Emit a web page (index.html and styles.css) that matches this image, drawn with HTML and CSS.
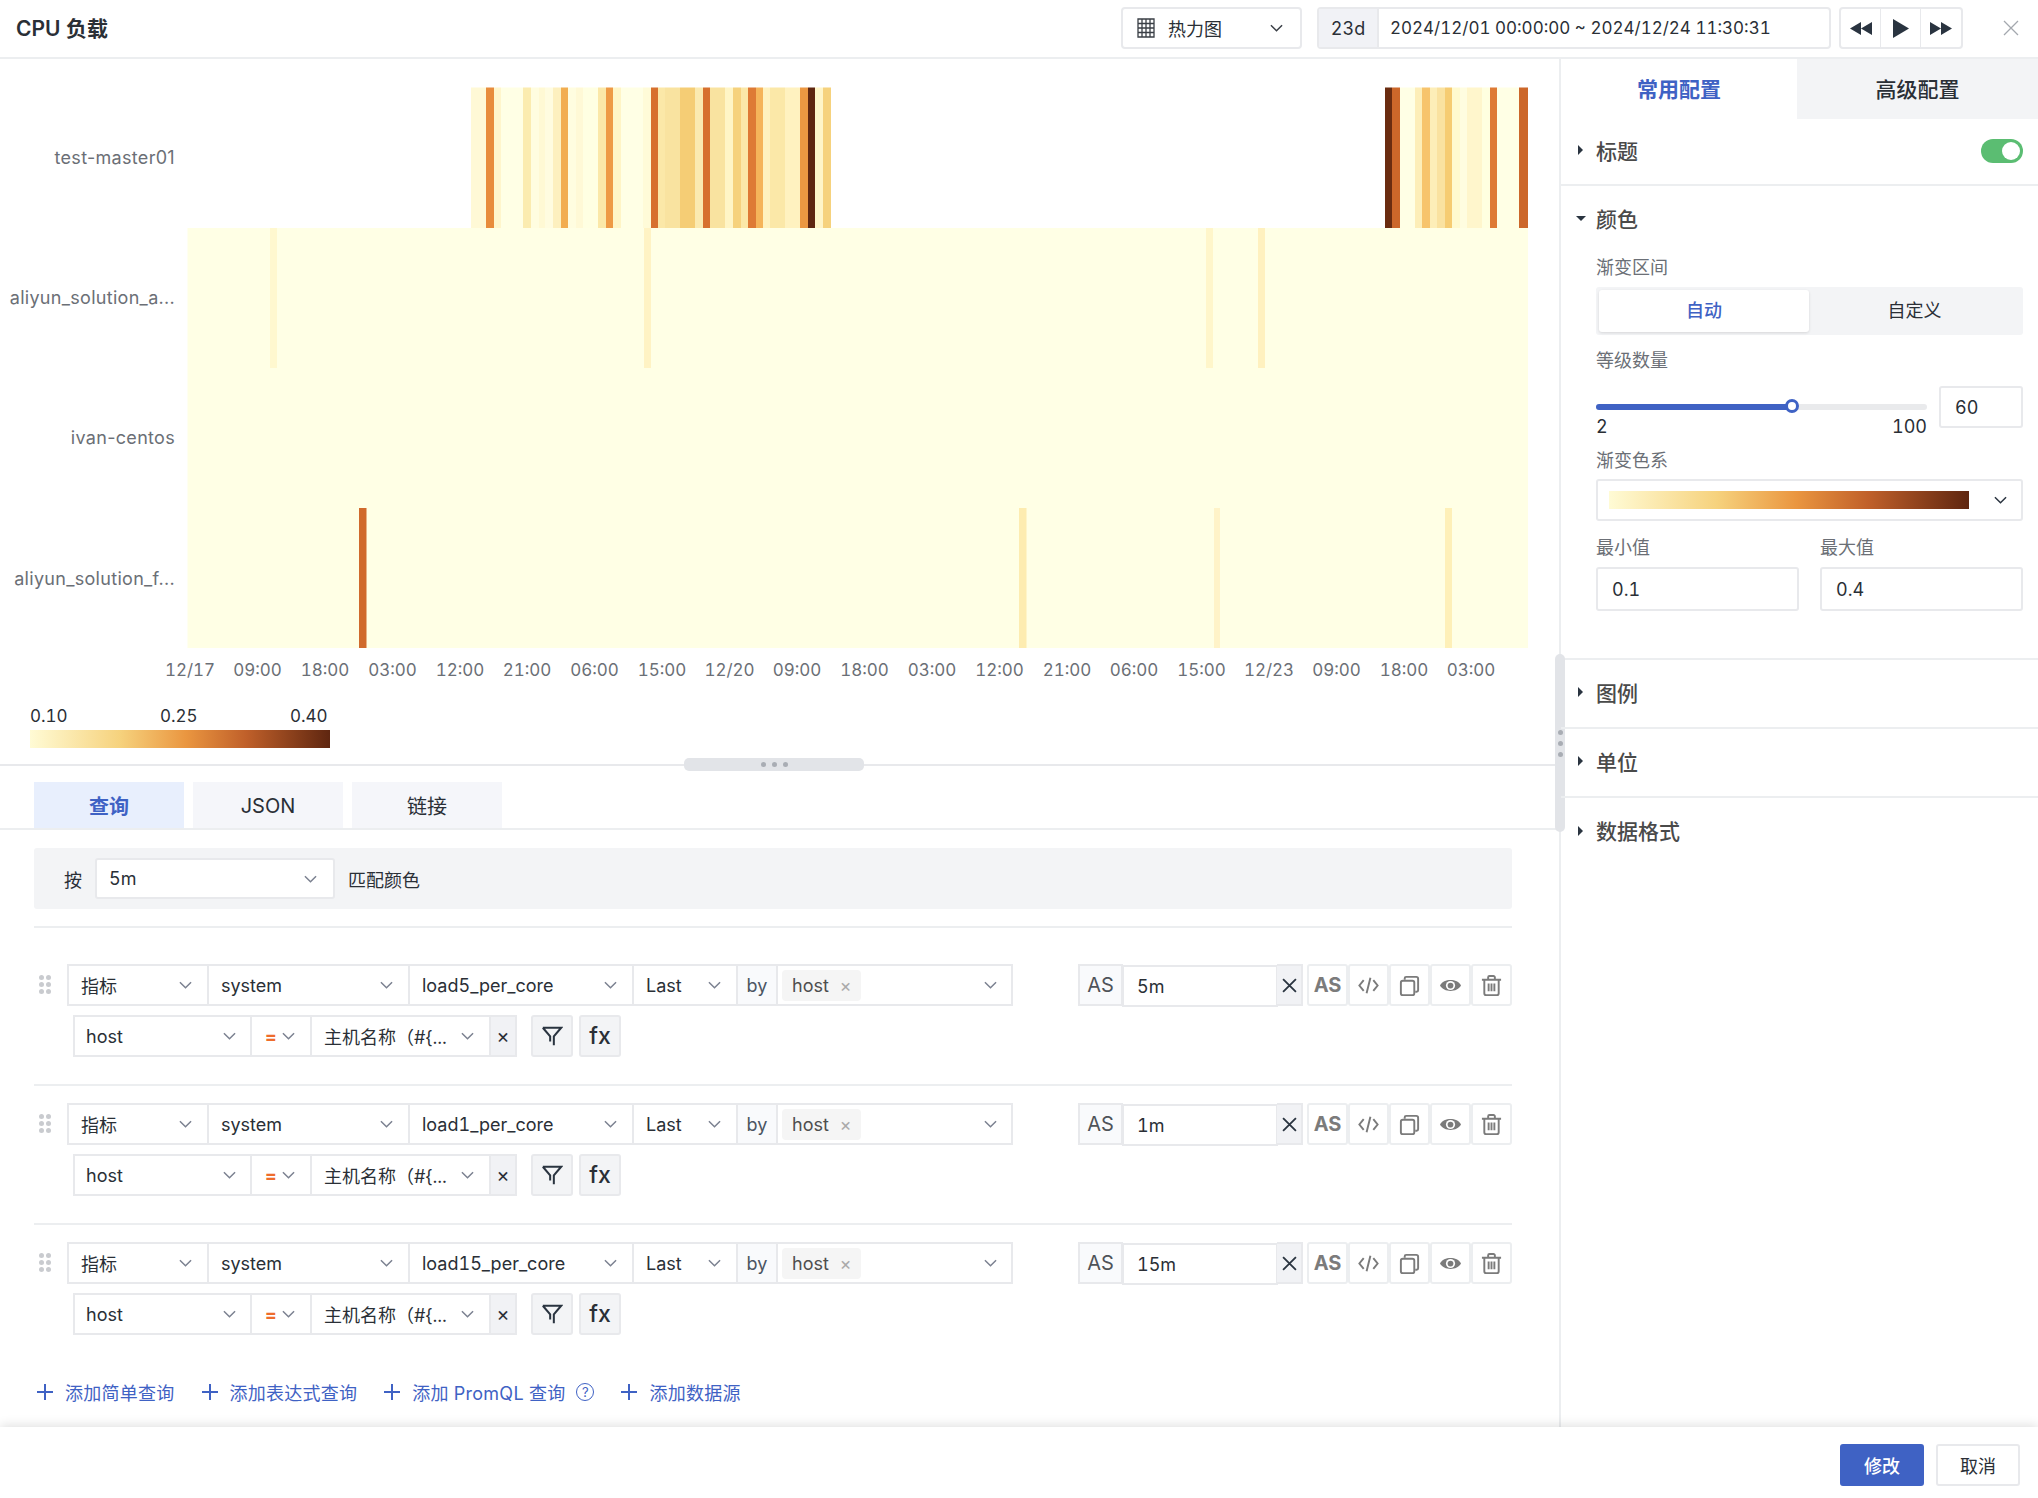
FILE: index.html
```html
<!DOCTYPE html>
<html lang="zh-CN">
<head>
    <meta charset="UTF-8">
    <title>CPU 负载</title>
    <link rel="stylesheet" href="styles.css">
</head>
<body>
    <svg class="defs">
        <symbol id="chev" viewBox="0 0 14 8"><path d="M1 1l6 6 6-6"/></symbol>
        <symbol id="cross" viewBox="0 0 14 14"><path d="M1 1l12 12M13 1L1 13"/></symbol>
        <symbol id="code" viewBox="0 0 24 24"><path d="M7 6.500L2.500 12 7 17.500M17 6.500l4.500 5.500L17 17.500M14 4l-4 16"/></symbol>
        <symbol id="copy" viewBox="0 0 24 24"><rect x="3" y="7" width="14" height="15" rx="2"/><path d="M7 6V4.500A1.500 1.500 0 0 1 8.500 3H19a2 2 0 0 1 2 2v12a1.500 1.500 0 0 1-1.500 1.500H18"/></symbol>
        <symbol id="eye" viewBox="0 0 24 24"><path class="solid" d="M1 12C5 4.500 19 4.500 23 12 19 19.500 5 19.500 1 12z"/><circle class="hole" cx="12" cy="12" r="4.800"/><circle class="solid" cx="12" cy="12" r="3"/></symbol>
        <symbol id="trash" viewBox="0 0 24 24"><path d="M2 6h20M8.500 6V3.500A1.500 1.500 0 0 1 10 2h4a1.500 1.500 0 0 1 1.500 1.500V6M4.500 6v14a2 2 0 0 0 2 2h11a2 2 0 0 0 2-2V6M9 10v8M12 10v8M15 10v8"/></symbol>
        <symbol id="funnel" viewBox="0 0 24 24"><path d="M2 3h20l-8 9.500V22M2 3l8 9.500V18"/></symbol>
        <symbol id="plus" viewBox="0 0 16 16"><path d="M8 0v16M0 8h16"/></symbol>
    </svg>

    <header class="top">
        <div class="title">CPU 负载</div>
        <div class="chart-type">
            <svg class="grid-icon" viewBox="0 0 18 20"><path d="M1 1h16v18H1zM1 5.500h16M1 10h16M1 14.500h16M5 1v18M9 1v18M13 1v18"/></svg>
            <span class="chart-type-text">热力图</span>
            <svg class="chev"><use href="#chev"/></svg>
        </div>
        <div class="range">
            <span class="range-tag">23d</span>
            <span class="range-text">2024/12/01 00:00:00 ~ 2024/12/24 11:30:31</span>
        </div>
        <div class="player">
            <span class="player-btn"><svg class="rew" viewBox="0 0 22 13"><path d="M11 0v13L0 6.500zM22 0v13L11 6.500z"/></svg></span>
            <span class="player-btn"><svg class="play" viewBox="0 0 16 19"><path d="M0 0l16 9.500L0 19z"/></svg></span>
            <span class="player-btn"><svg class="rew" viewBox="0 0 22 13"><path d="M0 0l11 6.500L0 13zM11 0l11 6.500L11 13z"/></svg></span>
        </div>
        <svg class="close" viewBox="0 0 16 16"><path d="M1 1l14 14M15 1L1 15"/></svg>
    </header>

    <div class="main">
        <div class="left">
            <svg class="chart" viewBox="0 59 1559 705">
                <text class="row-label" x="175" y="164">test-master01</text>
                <text class="row-label" x="175" y="304">aliyun_solution_a...</text>
                <text class="row-label" x="175" y="444">ivan-centos</text>
                <text class="row-label" x="175" y="585">aliyun_solution_f...</text>

                <rect x="187.500" y="228" width="1340.500" height="420" fill="#ffffe5"/>

                <g class="heat-top">
                    <rect x="471" width="15" fill="#fff9d6"/>
                    <rect x="486" width="8" fill="#e88c3c"/>
                    <rect x="494" width="7" fill="#fff6cc"/>
                    <rect x="501" width="22" fill="#ffffe5"/>
                    <rect x="523" width="8" fill="#fbecb0"/>
                    <rect x="531" width="8" fill="#fffde0"/>
                    <rect x="539" width="6" fill="#fff9d4"/>
                    <rect x="545" width="8" fill="#fffce0"/>
                    <rect x="553" width="8" fill="#fdf0bf"/>
                    <rect x="561" width="7" fill="#f2ad50"/>
                    <rect x="568" width="8" fill="#fffde0"/>
                    <rect x="576" width="7" fill="#fff9d6"/>
                    <rect x="583" width="15" fill="#ffffe2"/>
                    <rect x="598" width="8" fill="#fbe8a8"/>
                    <rect x="606" width="7" fill="#ee9a45"/>
                    <rect x="613" width="8" fill="#fff5c6"/>
                    <rect x="621" width="22" fill="#ffffe5"/>
                    <rect x="643" width="8" fill="#fffbd8"/>
                    <rect x="651" width="7" fill="#d7702e"/>
                    <rect x="658" width="7" fill="#fbe8a8"/>
                    <rect x="665" width="15" fill="#f9e3a0"/>
                    <rect x="680" width="15" fill="#f5cd75"/>
                    <rect x="695" width="8" fill="#fbeab0"/>
                    <rect x="703" width="7" fill="#d7702e"/>
                    <rect x="710" width="15" fill="#f9e3a0"/>
                    <rect x="725" width="8" fill="#fff5c6"/>
                    <rect x="733" width="8" fill="#f6d27d"/>
                    <rect x="741" width="7" fill="#fbe8a8"/>
                    <rect x="748" width="8" fill="#de7a35"/>
                    <rect x="756" width="7" fill="#f5b45a"/>
                    <rect x="763" width="7" fill="#fff2bf"/>
                    <rect x="770" width="15" fill="#fbe8a8"/>
                    <rect x="785" width="15" fill="#fff2c0"/>
                    <rect x="800" width="8" fill="#ec9842"/>
                    <rect x="808" width="7" fill="#5f2610"/>
                    <rect x="815" width="8" fill="#fff5c8"/>
                    <rect x="823" width="8" fill="#f6d27d"/>

                    <rect x="1385" width="7" fill="#6a2c10"/>
                    <rect x="1392" width="8" fill="#cc672a"/>
                    <rect x="1400" width="15" fill="#ffffe5"/>
                    <rect x="1415" width="7" fill="#fdeeb8"/>
                    <rect x="1422" width="8" fill="#f7c46c"/>
                    <rect x="1430" width="7" fill="#fdeeb8"/>
                    <rect x="1437" width="8" fill="#fae2a0"/>
                    <rect x="1445" width="7" fill="#f6cc72"/>
                    <rect x="1452" width="8" fill="#fffacf"/>
                    <rect x="1460" width="7" fill="#fffde0"/>
                    <rect x="1467" width="15" fill="#fff6cc"/>
                    <rect x="1482" width="8" fill="#ffffe0"/>
                    <rect x="1490" width="7" fill="#de7a35"/>
                    <rect x="1497" width="22" fill="#ffffe5"/>
                    <rect x="1519" width="9" fill="#cc672a"/>
                </g>

                <g class="heat-second">
                    <rect x="270" width="7" fill="#fff8cf"/>
                    <rect x="644" width="7" fill="#fff3c4"/>
                    <rect x="1206" width="7" fill="#fff6ca"/>
                    <rect x="1258" width="7" fill="#fff1bf"/>
                </g>

                <g class="heat-last">
                    <rect x="359" width="7.500" fill="#d06a2c"/>
                    <rect x="1019" width="7.500" fill="#fdecb0"/>
                    <rect x="1214" width="6" fill="#fff3c8"/>
                    <rect x="1445" width="7" fill="#fef0b8"/>
                </g>

                <g class="axis">
                    <text x="190" y="676">12/17</text>
                    <text x="257.500" y="676">09:00</text>
                    <text x="325" y="676">18:00</text>
                    <text x="392.500" y="676">03:00</text>
                    <text x="460" y="676">12:00</text>
                    <text x="527" y="676">21:00</text>
                    <text x="594.500" y="676">06:00</text>
                    <text x="662" y="676">15:00</text>
                    <text x="729.500" y="676">12/20</text>
                    <text x="797" y="676">09:00</text>
                    <text x="864.500" y="676">18:00</text>
                    <text x="932" y="676">03:00</text>
                    <text x="999.500" y="676">12:00</text>
                    <text x="1067" y="676">21:00</text>
                    <text x="1134" y="676">06:00</text>
                    <text x="1201.500" y="676">15:00</text>
                    <text x="1269" y="676">12/23</text>
                    <text x="1336.500" y="676">09:00</text>
                    <text x="1404" y="676">18:00</text>
                    <text x="1471" y="676">03:00</text>
                </g>

                <defs>
                    <linearGradient id="ramp">
                        <stop offset="0" stop-color="#fffbd5"/>
                        <stop offset="0.300" stop-color="#f6d27d"/>
                        <stop offset="0.520" stop-color="#ea9640"/>
                        <stop offset="0.720" stop-color="#c0602a"/>
                        <stop offset="1" stop-color="#5f2610"/>
                    </linearGradient>
                </defs>
                <g class="legend">
                    <text x="30" y="722">0.10</text>
                    <text x="160" y="722">0.25</text>
                    <text x="290" y="722">0.40</text>
                </g>
                <rect x="30" y="730" width="300" height="18" fill="url(#ramp)"/>
            </svg>

            <div class="splitter">
                <div class="splitter-grip"><i></i><i></i><i></i></div>
            </div>

            <div class="tabs">
                <div class="tab tab-on">查询</div>
                <div class="tab">JSON</div>
                <div class="tab">链接</div>
            </div>

            <div class="query">
                <div class="color-bar">
                    <span class="color-by">按</span>
                    <div class="color-select"><span>5m</span><svg class="chev"><use href="#chev"/></svg></div>
                    <span>匹配颜色</span>
                </div>

                <div class="rows">
                    <div class="q-row">
                        <div class="drag"><i></i><i></i><i></i><i></i><i></i><i></i></div>
                        <div class="q-lines">
                            <div class="q-line">
                                <div class="cell w140"><span>指标</span><svg class="chev"><use href="#chev"/></svg></div>
                                <div class="cell w201"><span>system</span><svg class="chev"><use href="#chev"/></svg></div>
                                <div class="cell w224"><span>load5_per_core</span><svg class="chev"><use href="#chev"/></svg></div>
                                <div class="cell w104"><span>Last</span><svg class="chev"><use href="#chev"/></svg></div>
                                <div class="cell-by">by</div>
                                <div class="cell w233"><span class="tag">host<b>×</b></span><svg class="chev"><use href="#chev"/></svg></div>
                            </div>
                            <div class="q-line-2">
                                <div class="q-line">
                                    <div class="cell w177"><span>host</span><svg class="chev"><use href="#chev"/></svg></div>
                                    <div class="cell w60"><span class="eq">=</span><svg class="chev"><use href="#chev"/></svg></div>
                                    <div class="cell w179"><span>主机名称（#{...</span><svg class="chev"><use href="#chev"/></svg></div>
                                    <div class="cell-x">×</div>
                                </div>
                                <div class="grey-btn btn-first"><svg class="funnel"><use href="#funnel"/></svg></div>
                                <div class="grey-btn">fx</div>
                            </div>
                        </div>
                        <div class="as-box">
                            <div class="as-tag">AS</div>
                            <div class="as-input">5m</div>
                            <div class="as-x"><svg class="cross"><use href="#cross"/></svg></div>
                            <div class="tools">
                                <div class="tool tool-as">AS</div>
                                <div class="tool"><svg class="tool-icon"><use href="#code"/></svg></div>
                                <div class="tool"><svg class="tool-icon"><use href="#copy"/></svg></div>
                                <div class="tool"><svg class="tool-icon"><use href="#eye"/></svg></div>
                                <div class="tool"><svg class="tool-icon"><use href="#trash"/></svg></div>
                            </div>
                        </div>
                    </div>

                    <div class="q-row">
                        <div class="drag"><i></i><i></i><i></i><i></i><i></i><i></i></div>
                        <div class="q-lines">
                            <div class="q-line">
                                <div class="cell w140"><span>指标</span><svg class="chev"><use href="#chev"/></svg></div>
                                <div class="cell w201"><span>system</span><svg class="chev"><use href="#chev"/></svg></div>
                                <div class="cell w224"><span>load1_per_core</span><svg class="chev"><use href="#chev"/></svg></div>
                                <div class="cell w104"><span>Last</span><svg class="chev"><use href="#chev"/></svg></div>
                                <div class="cell-by">by</div>
                                <div class="cell w233"><span class="tag">host<b>×</b></span><svg class="chev"><use href="#chev"/></svg></div>
                            </div>
                            <div class="q-line-2">
                                <div class="q-line">
                                    <div class="cell w177"><span>host</span><svg class="chev"><use href="#chev"/></svg></div>
                                    <div class="cell w60"><span class="eq">=</span><svg class="chev"><use href="#chev"/></svg></div>
                                    <div class="cell w179"><span>主机名称（#{...</span><svg class="chev"><use href="#chev"/></svg></div>
                                    <div class="cell-x">×</div>
                                </div>
                                <div class="grey-btn btn-first"><svg class="funnel"><use href="#funnel"/></svg></div>
                                <div class="grey-btn">fx</div>
                            </div>
                        </div>
                        <div class="as-box">
                            <div class="as-tag">AS</div>
                            <div class="as-input">1m</div>
                            <div class="as-x"><svg class="cross"><use href="#cross"/></svg></div>
                            <div class="tools">
                                <div class="tool tool-as">AS</div>
                                <div class="tool"><svg class="tool-icon"><use href="#code"/></svg></div>
                                <div class="tool"><svg class="tool-icon"><use href="#copy"/></svg></div>
                                <div class="tool"><svg class="tool-icon"><use href="#eye"/></svg></div>
                                <div class="tool"><svg class="tool-icon"><use href="#trash"/></svg></div>
                            </div>
                        </div>
                    </div>

                    <div class="q-row">
                        <div class="drag"><i></i><i></i><i></i><i></i><i></i><i></i></div>
                        <div class="q-lines">
                            <div class="q-line">
                                <div class="cell w140"><span>指标</span><svg class="chev"><use href="#chev"/></svg></div>
                                <div class="cell w201"><span>system</span><svg class="chev"><use href="#chev"/></svg></div>
                                <div class="cell w224"><span>load15_per_core</span><svg class="chev"><use href="#chev"/></svg></div>
                                <div class="cell w104"><span>Last</span><svg class="chev"><use href="#chev"/></svg></div>
                                <div class="cell-by">by</div>
                                <div class="cell w233"><span class="tag">host<b>×</b></span><svg class="chev"><use href="#chev"/></svg></div>
                            </div>
                            <div class="q-line-2">
                                <div class="q-line">
                                    <div class="cell w177"><span>host</span><svg class="chev"><use href="#chev"/></svg></div>
                                    <div class="cell w60"><span class="eq">=</span><svg class="chev"><use href="#chev"/></svg></div>
                                    <div class="cell w179"><span>主机名称（#{...</span><svg class="chev"><use href="#chev"/></svg></div>
                                    <div class="cell-x">×</div>
                                </div>
                                <div class="grey-btn btn-first"><svg class="funnel"><use href="#funnel"/></svg></div>
                                <div class="grey-btn">fx</div>
                            </div>
                        </div>
                        <div class="as-box">
                            <div class="as-tag">AS</div>
                            <div class="as-input">15m</div>
                            <div class="as-x"><svg class="cross"><use href="#cross"/></svg></div>
                            <div class="tools">
                                <div class="tool tool-as">AS</div>
                                <div class="tool"><svg class="tool-icon"><use href="#code"/></svg></div>
                                <div class="tool"><svg class="tool-icon"><use href="#copy"/></svg></div>
                                <div class="tool"><svg class="tool-icon"><use href="#eye"/></svg></div>
                                <div class="tool"><svg class="tool-icon"><use href="#trash"/></svg></div>
                            </div>
                        </div>
                    </div>
                </div>

                <div class="adds">
                    <div class="add"><svg class="plus"><use href="#plus"/></svg>添加简单查询</div>
                    <div class="add"><svg class="plus"><use href="#plus"/></svg>添加表达式查询</div>
                    <div class="add"><svg class="plus"><use href="#plus"/></svg>添加 PromQL 查询<span class="help">?</span></div>
                    <div class="add"><svg class="plus"><use href="#plus"/></svg>添加数据源</div>
                </div>
            </div>
        </div>

        <aside class="side">
            <div class="side-grip"><i></i><i></i><i></i></div>
            <div class="side-tabs">
                <div class="side-tab side-tab-on">常用配置</div>
                <div class="side-tab">高级配置</div>
            </div>

            <div class="sec sec-first">
                <span class="arrow-right"></span>
                <span>标题</span>
                <span class="toggle"></span>
            </div>

            <div class="sec sec-open">
                <span class="arrow-down"></span>
                <span>颜色</span>
            </div>
            <div class="form">
                <div class="label">渐变区间</div>
                <div class="seg">
                    <div class="seg-item seg-on">自动</div>
                    <div class="seg-item">自定义</div>
                </div>

                <div class="label label-gap">等级数量</div>
                <div class="slider-row">
                    <div class="slider">
                        <div class="track"><div class="track-fill"></div><span class="thumb"></span></div>
                        <div class="slider-ends"><span>2</span><span>100</span></div>
                    </div>
                    <div class="num-input">60</div>
                </div>

                <div class="label label-tight">渐变色系</div>
                <div class="ramp-select">
                    <div class="ramp"></div>
                    <svg class="chev chev-dark"><use href="#chev"/></svg>
                </div>

                <div class="min-max">
                    <div class="mm-col">
                        <div class="label">最小值</div>
                        <div class="mm-input">0.1</div>
                    </div>
                    <div class="mm-col">
                        <div class="label">最大值</div>
                        <div class="mm-input">0.4</div>
                    </div>
                </div>
            </div>

            <div class="sec"><span class="arrow-right"></span><span>图例</span></div>
            <div class="sec"><span class="arrow-right"></span><span>单位</span></div>
            <div class="sec sec-last"><span class="arrow-right"></span><span>数据格式</span></div>
        </aside>
    </div>

    <footer class="foot">
        <div class="btn btn-primary">修改</div>
        <div class="btn">取消</div>
    </footer>
</body>
</html>
```

FILE: styles.css
```css
* {
    box-sizing: border-box;
}

body {
    margin: 0;
    height: 100vh;
    display: flex;
    flex-direction: column;
    overflow: hidden;
    background-color: #fff;
    color: #2a2f36;
    font-family: Inter, "Noto Sans CJK SC", sans-serif;
    font-size: 18px;
    font-variant-numeric: tabular-nums;
}

.defs {
    display: none;
}

.chev {
    flex: none;
    width: 13px;
    height: 8px;
    fill: none;
    stroke: #7b8190;
    stroke-width: 1.6;
}

/* 顶部栏 */
.top {
    flex: none;
    height: 59px;
    display: flex;
    align-items: center;
    padding: 0 0 1px 16px;
    border-bottom: 2px solid #eceef0;
}

.title {
    flex: 1;
    padding-bottom: 2px;
    font-size: 21px;
    font-weight: 600;
}

.chart-type {
    width: 181px;
    height: 42px;
    display: flex;
    align-items: center;
    padding-left: 14px;
    border: 2px solid #e8e9ec;
    border-radius: 4px;
}

.grid-icon {
    width: 18px;
    height: 20px;
    fill: none;
    stroke: #3a3f46;
    stroke-width: 1.3;
}

.chart-type-text {
    flex: 1;
    margin-left: 13px;
}

.chart-type .chev {
    margin-right: 17px;
    stroke: #3a3f46;
}

.range {
    width: 514px;
    height: 42px;
    margin-left: 15px;
    display: flex;
    align-items: center;
    border: 2px solid #e8e9ec;
    border-radius: 4px;
}

.range-tag {
    width: 60px;
    height: 100%;
    display: flex;
    align-items: center;
    justify-content: center;
    background-color: #f1f2f6;
    border-right: 2px solid #e8e9ec;
}

.range-text {
    margin-left: 11px;
    font-size: 17px;
}

.player {
    height: 42px;
    margin-left: 8px;
    display: flex;
    border: 2px solid #e8e9ec;
    border-radius: 4px;
}

.player-btn {
    width: 40px;
    display: flex;
    align-items: center;
    justify-content: center;
    border-right: 1px solid #e8e9ec;
}

.player-btn:last-child {
    border-right: none;
}

.rew {
    width: 22px;
    height: 13px;
    fill: #2a3440;
}

.play {
    width: 16px;
    height: 19px;
    fill: #2a3440;
}

.close {
    width: 16px;
    height: 16px;
    margin: 0 19px 0 40px;
    fill: none;
    stroke: #a4a8ae;
    stroke-width: 1.3;
}

/* 主体 */
.main {
    flex: 1;
    display: flex;
    min-height: 0;
}

.left {
    width: 1559px;
    flex: none;
}

.chart {
    display: block;
    width: 1559px;
    height: 705px;
}

.chart text {
    font-size: 17px;
}

.chart .row-label {
    fill: #6b6f76;
    text-anchor: end;
    font-size: 18px;
    letter-spacing: 0.3px;
    font-variant-numeric: normal;
}

.heat-top rect {
    y: 87.500px;
    height: 140.500px;
}

.heat-second rect {
    y: 228px;
    height: 140px;
}

.heat-last rect {
    y: 508px;
    height: 140px;
}

.axis text {
    fill: #6b6f76;
    text-anchor: middle;
}

.legend text {
    fill: #2a2f36;
}

.splitter {
    position: relative;
    height: 2px;
    background-color: #e8e9ec;
}

.splitter-grip {
    position: absolute;
    left: 684px;
    top: -6px;
    width: 180px;
    height: 13px;
    display: flex;
    align-items: center;
    justify-content: center;
    gap: 6px;
    background-color: #e2e4e8;
    border-radius: 5px;
}

.splitter-grip i {
    width: 5px;
    height: 5px;
    border-radius: 50%;
    background-color: #a9adb4;
}

.tabs {
    margin-top: 16px;
    height: 48px;
    display: flex;
    gap: 9px;
    padding-left: 34px;
    border-bottom: 2px solid #eceef0;
}

.tab {
    width: 150px;
    height: 46px;
    display: flex;
    align-items: center;
    justify-content: center;
    padding-top: 1px;
    font-size: 20px;
    background-color: #f5f6fa;
}

.tab-on {
    background-color: #e8effd;
    color: #3f62c4;
    font-weight: 600;
}

.query {
    padding: 18px 47px 0 34px;
}

.color-bar {
    height: 61px;
    display: flex;
    align-items: center;
    padding-left: 30px;
    background-color: #f3f4f6;
    border-radius: 3px;
}

.color-select {
    width: 240px;
    height: 41px;
    margin: 0 13px 0 13px;
    display: flex;
    align-items: center;
    justify-content: space-between;
    padding: 0 16px 0 12px;
    background-color: #fff;
    border: 2px solid #e8e9ec;
    border-radius: 3px;
}

.rows {
    margin-top: 17px;
    border-top: 2px solid #eceef0;
    padding-top: 19px;
}

.q-row {
    display: flex;
    padding: 17px 0 27px;
    border-bottom: 2px solid #eceef0;
}

.q-row:last-child {
    border-bottom: none;
}

.drag {
    width: 33px;
    height: 18px;
    margin-top: 11px;
    padding-left: 5px;
    display: grid;
    grid-template-columns: 4px 4px;
    grid-auto-rows: 4px;
    gap: 3px;
}

.drag i {
    width: 5px;
    height: 5px;
    border-radius: 50%;
    background-color: #c9cbcf;
}

.q-lines {
    flex: 1;
}

.q-line {
    display: flex;
    width: max-content;
    height: 42px;
    border: 2px solid #e8e9ec;
}

.q-line-2 {
    margin: 9px 0 0 6px;
    display: flex;
}

.cell {
    display: flex;
    align-items: center;
    justify-content: space-between;
    padding: 0 15px 0 12px;
    border-right: 2px solid #e8e9ec;
}

.cell:last-child {
    border-right: none;
}

.w140 { width: 140px; }
.w201 { width: 201px; }
.w224 { width: 224px; }
.w104 { width: 104px; }
.w233 { width: 233px; padding-left: 4px; padding-right: 14px; }
.w177 { width: 177px; padding-left: 11px; padding-right: 14px; }
.w179 { width: 179px; }
.w60 { width: 60px; padding-right: 15px; padding-left: 13px; }

.cell-by {
    width: 40px;
    display: flex;
    align-items: center;
    justify-content: center;
    background-color: #f9fafc;
    border-right: 2px solid #e8e9ec;
    color: #4b5563;
}

.tag {
    height: 31px;
    width: 79px;
    display: flex;
    align-items: center;
    padding-left: 10px;
    background-color: #f5f5f5;
    border-radius: 4px;
    color: #4e4e4e;
}

.tag b {
    margin-left: 11px;
    color: #aaa;
    font-weight: 400;
    font-size: 18px;
}

.eq {
    color: #ee6c2c;
    font-weight: 700;
}

.cell-x {
    width: 24px;
    display: flex;
    align-items: center;
    justify-content: center;
    background-color: #f1f2f5;
    font-size: 20px;
}

.grey-btn {
    width: 42px;
    height: 42px;
    display: flex;
    align-items: center;
    justify-content: center;
    margin-left: 6px;
    background-color: #f3f4f6;
    border: 2px solid #e8e9ec;
    border-radius: 3px;
    font-size: 23px;
    font-weight: 500;
}

.btn-first {
    margin-left: 14px;
}

.funnel {
    width: 22px;
    height: 22px;
    fill: none;
    stroke: #2a3440;
    stroke-width: 2.200;
}

.as-box {
    display: flex;
    height: 42px;
}

.as-tag {
    width: 45px;
    display: flex;
    align-items: center;
    justify-content: center;
    background-color: #f9fafc;
    border: 2px solid #e8e9ec;
    color: #4f5359;
    font-size: 20px;
}

.as-input {
    width: 156px;
    height: 42px;
    margin: 1px 0 0 -1px;
    display: flex;
    align-items: center;
    padding-left: 13px;
    border: 2px solid #e8e9ec;
}

.as-x {
    width: 26px;
    margin-left: -1px;
    display: flex;
    align-items: center;
    justify-content: center;
    background-color: #f1f2f5;
    border: 2px solid #e8e9ec;
    border-left: none;
}

.cross {
    width: 15px;
    height: 15px;
    fill: none;
    stroke: #2a3440;
    stroke-width: 1.7;
}

.tools {
    margin-left: 4px;
    display: flex;
}

.tool {
    width: 41px;
    height: 42px;
    display: flex;
    align-items: center;
    justify-content: center;
    border: 2px solid #eceef0;
    border-radius: 3px;
}

.tool-as {
    color: #7b7b7b;
    font-size: 20px;
    font-weight: 700;
}

.tool-icon {
    width: 23px;
    height: 23px;
    fill: none;
    stroke: #7b7b7b;
    stroke-width: 2;
}

.solid {
    fill: #7b7b7b;
    stroke: none;
}

.hole {
    fill: #fff;
    stroke: none;
}

.adds {
    margin-top: 18px;
    height: 24px;
    display: flex;
    gap: 27px;
    padding-left: 3px;
    color: #3f62c4;
    letter-spacing: 0.25px;
}

.add {
    display: flex;
    align-items: center;
}

.plus {
    width: 16px;
    height: 16px;
    margin-right: 12px;
    fill: none;
    stroke: #3f62c4;
    stroke-width: 2;
}

.help {
    width: 18px;
    height: 18px;
    margin-left: 11px;
    display: flex;
    align-items: center;
    justify-content: center;
    border: 1.500px solid #3f62c4;
    border-radius: 50%;
    font-size: 13px;
}

/* 右侧配置 */
.side {
    position: relative;
    flex: 1;
    border-left: 2px solid #eceef0;
}

.side-grip {
    position: absolute;
    left: -6px;
    top: 595px;
    width: 10px;
    height: 178px;
    display: flex;
    flex-direction: column;
    align-items: center;
    justify-content: center;
    gap: 6px;
    background-color: #e2e4e8;
    border-radius: 5px;
}

.side-grip i {
    width: 5px;
    height: 5px;
    border-radius: 50%;
    background-color: #a9adb4;
}

.side-tabs {
    height: 60px;
    display: flex;
}

.side-tab {
    flex: 1;
    display: flex;
    align-items: center;
    justify-content: center;
    padding-bottom: 2px;
    font-size: 21px;
    font-weight: 500;
    background-color: #f3f4f6;
}

.side-tab-on {
    flex: none;
    width: 236px;
    background-color: #fff;
    color: #3f62c4;
    font-weight: 600;
}

.sec {
    height: 69px;
    display: flex;
    align-items: center;
    padding: 0 0 4px 35px;
    position: relative;
    border-bottom: 2px solid #eceef0;
    font-size: 21px;
    font-weight: 500;
    color: #4a4a4a;
}

.sec-first {
    height: 67px;
}

.sec-open {
    height: 66px;
    padding-bottom: 2px;
    border-bottom: none;
}

.sec-last {
    padding-bottom: 6px;
    border-bottom: none;
}

.arrow-right {
    position: absolute;
    left: 17px;
    top: 50%;
    margin-top: -7px;
    border-left: 5px solid #2a3440;
    border-top: 5px solid transparent;
    border-bottom: 5px solid transparent;
}

.arrow-down {
    position: absolute;
    left: 15px;
    top: 50%;
    margin-top: -3px;
    border-top: 5px solid #2a3440;
    border-left: 5px solid transparent;
    border-right: 5px solid transparent;
}

.toggle {
    position: absolute;
    right: 15px;
    top: 50%;
    margin-top: -13px;
    width: 42px;
    height: 24px;
    background-color: #5bbd72;
    border-radius: 12px;
}

.toggle::after {
    content: "";
    position: absolute;
    right: 3px;
    top: 3px;
    width: 18px;
    height: 18px;
    background-color: #fff;
    border-radius: 50%;
}

.form {
    padding: 3px 15px 47px 35px;
    border-bottom: 2px solid #eceef0;
}

.label {
    height: 24px;
    line-height: 26px;
    font-size: 18px;
    color: #6b6f76;
}

.label-gap {
    margin-top: 13px;
}

.label-tight {
    margin-top: 9px;
}

.seg {
    height: 48px;
    margin-top: 8px;
    padding: 3px;
    display: flex;
    background-color: #f3f4f6;
    border-radius: 3px;
}

.seg-item {
    flex: 1;
    display: flex;
    align-items: center;
    justify-content: center;
    padding-bottom: 4px;
}

.seg-on {
    flex: none;
    width: 210px;
    background-color: #fff;
    border-radius: 3px;
    color: #3f62c4;
    font-weight: 500;
    box-shadow: 0 1px 3px rgba(0, 0, 0, 0.12);
}

.slider-row {
    margin-top: 14px;
    display: flex;
    gap: 12px;
}

.slider {
    flex: 1;
    padding-top: 18px;
}

.track {
    position: relative;
    height: 6px;
    background-color: #e9eaec;
    border-radius: 3px;
}

.track-fill {
    width: 59.300%;
    height: 100%;
    background-color: #3f62c4;
    border-radius: 3px;
}

.thumb {
    position: absolute;
    left: 59.300%;
    top: -5px;
    width: 14px;
    height: 14px;
    margin-left: -7px;
    background-color: #fff;
    border: 3px solid #3f62c4;
    border-radius: 50%;
}

.slider-ends {
    height: 24px;
    margin-top: 5px;
    line-height: 24px;
    display: flex;
    justify-content: space-between;
}

.num-input {
    width: 84px;
    height: 42px;
    display: flex;
    align-items: center;
    padding-left: 14px;
    border: 2px solid #e8e9ec;
    border-radius: 3px;
}

.ramp-select {
    height: 42px;
    margin-top: 7px;
    display: flex;
    align-items: center;
    justify-content: space-between;
    padding: 0 14px 0 11px;
    border: 2px solid #e8e9ec;
    border-radius: 3px;
}

.ramp {
    width: 360px;
    height: 18px;
    background: linear-gradient(to right, #fffbd5, #f6d27d 30%, #ea9640 52%, #c0602a 72%, #5f2610);
}

.chev-dark {
    stroke: #2a3440;
}

.min-max {
    margin-top: 14px;
    display: flex;
    gap: 21px;
}

.mm-col {
    flex: 1;
}

.mm-input {
    height: 44px;
    margin-top: 8px;
    display: flex;
    align-items: center;
    padding-left: 14px;
    border: 2px solid #e8e9ec;
    border-radius: 3px;
}

/* 底部 */
.foot {
    flex: none;
    height: 71px;
    display: flex;
    align-items: center;
    justify-content: flex-end;
    gap: 12px;
    padding: 5px 18px 0 0;
    background-color: #fff;
    box-shadow: 0 -2px 10px rgba(0, 0, 0, 0.12);
    position: relative;
}

.btn {
    width: 84px;
    height: 42px;
    display: flex;
    align-items: center;
    justify-content: center;
    border: 2px solid #e8e9ec;
    border-radius: 3px;
}

.btn-primary {
    background-color: #3f62c4;
    border-color: #3f62c4;
    color: #fff;
    font-weight: 500;
}
```
